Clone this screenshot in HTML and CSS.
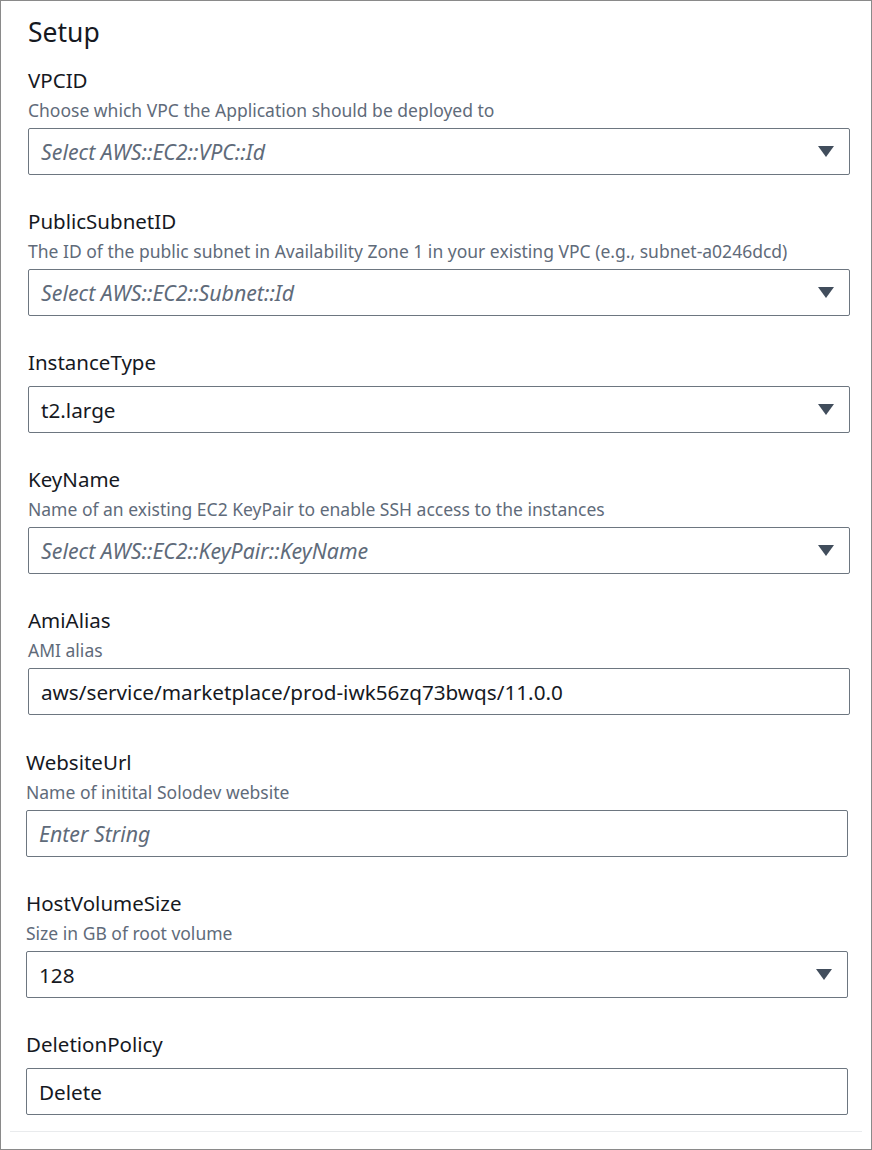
FILE: index.html
```html
<!DOCTYPE html>
<html lang="en">
<head>
<meta charset="utf-8">
<title>Setup</title>
<link rel="stylesheet" href="styles.css">
</head>
<body>
<div class="frame">
  <h2 class="title">Setup</h2>
  <div class="group group-a">
    <div class="field">
      <div class="label">VPCID</div>
      <div class="desc">Choose which VPC the Application should be deployed to</div>
      <div class="control select"><span class="placeholder">Select AWS::EC2::VPC::Id</span><svg class="caret" viewBox="0 0 16 11"><path d="M0 0H16L8 11Z"/></svg></div>
    </div>
    <div class="field">
      <div class="label">PublicSubnetID</div>
      <div class="desc">The ID of the public subnet in Availability Zone 1 in your existing VPC (e.g., subnet-a0246dcd)</div>
      <div class="control select"><span class="placeholder">Select AWS::EC2::Subnet::Id</span><svg class="caret" viewBox="0 0 16 11"><path d="M0 0H16L8 11Z"/></svg></div>
    </div>
    <div class="field">
      <div class="label">InstanceType</div>
      <div class="control select"><span class="value">t2.large</span><svg class="caret" viewBox="0 0 16 11"><path d="M0 0H16L8 11Z"/></svg></div>
    </div>
    <div class="field">
      <div class="label">KeyName</div>
      <div class="desc">Name of an existing EC2 KeyPair to enable SSH access to the instances</div>
      <div class="control select"><span class="placeholder">Select AWS::EC2::KeyPair::KeyName</span><svg class="caret" viewBox="0 0 16 11"><path d="M0 0H16L8 11Z"/></svg></div>
    </div>
    <div class="field">
      <div class="label">AmiAlias</div>
      <div class="desc">AMI alias</div>
      <div class="control"><span class="value">aws/service/marketplace/prod-iwk56zq73bwqs/11.0.0</span></div>
    </div>
  </div>
  <div class="group group-b">
    <div class="field">
      <div class="label">WebsiteUrl</div>
      <div class="desc">Name of initital Solodev website</div>
      <div class="control"><span class="placeholder">Enter String</span></div>
    </div>
    <div class="field">
      <div class="label">HostVolumeSize</div>
      <div class="desc">Size in GB of root volume</div>
      <div class="control select"><span class="value">128</span><svg class="caret" viewBox="0 0 16 11"><path d="M0 0H16L8 11Z"/></svg></div>
    </div>
    <div class="field">
      <div class="label">DeletionPolicy</div>
      <div class="control"><span class="value">Delete</span></div>
    </div>
  </div>
  <div class="divider"></div>
</div>
</body>
</html>
```

FILE: styles.css
```css
html, body {
  margin: 0;
  padding: 0;
  background: #ffffff;
}

.frame {
  box-sizing: border-box;
  width: 872px;
  height: 1150px;
  border: 1px solid #8a8a8a;
  font-family: "Noto Sans", "Open Sans", sans-serif;
  color: #16191f;
  display: flex;
  flex-direction: column;
}

.title {
  margin: 15px 0 19px 27px;
  font-size: 26.5px;
  line-height: 32px;
  font-weight: 400;
}

.group {
  display: flex;
  flex-direction: column;
  gap: 33px;
}

.group-a {
  padding-left: 27px;
}

.group-b {
  padding-left: 25px;
  margin-top: 34px;
}

.field {
  display: flex;
  flex-direction: column;
  width: 822px;
}

.label {
  font-size: 20.5px;
  line-height: 26px;
  margin-bottom: 6px;
}

.desc {
  font-size: 17.5px;
  line-height: 22px;
  color: #5f6b7a;
  margin-bottom: 7px;
  white-space: nowrap;
}

.label + .control {
  margin-top: 5px;
}

.control {
  box-sizing: border-box;
  height: 47px;
  border: 1px solid #6d7680;
  border-radius: 2px;
  padding: 0 15px 0 12px;
  display: flex;
  align-items: center;
  justify-content: space-between;
  font-size: 20.7px;
}

.placeholder {
  font-style: italic;
  font-size: 21.3px;
  color: #5f6b7a;
}

.value {
  color: #16191f;
}

.caret {
  width: 16px;
  height: 11px;
  fill: #414d5c;
  flex: none;
}

.divider {
  height: 1px;
  background: #e9ebed;
  margin: 16px 9px 0 9px;
}
```
